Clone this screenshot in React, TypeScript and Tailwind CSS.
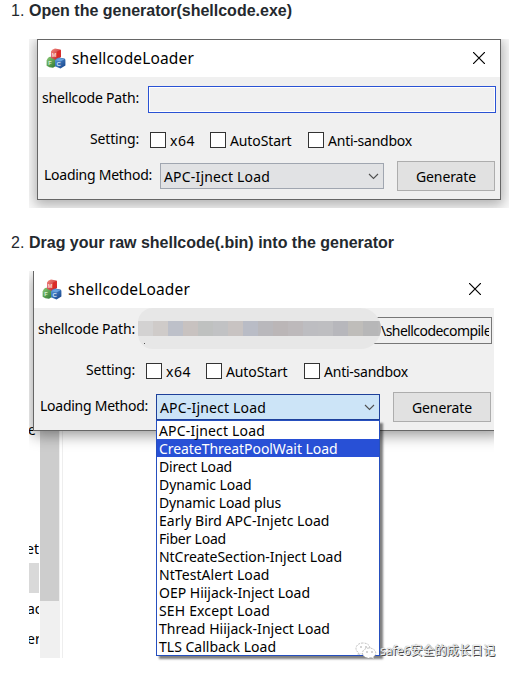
import React, { useLayoutEffect, useRef } from 'react';

const UI = "font-['Noto_Sans','Noto_Sans_CJK_SC',sans-serif]";

/* A single line of text whose letters are spaced to fill a given width. */
function Label({ text, width, className = '' }: { text: string; width: number; className?: string }) {
  const ref = useRef<HTMLSpanElement>(null);
  useLayoutEffect(() => {
    const el = ref.current;
    if (!el) return;
    const fit = () => {
      el.style.letterSpacing = '0px';
      const natural = el.getBoundingClientRect().width;
      el.style.letterSpacing = `${(width - natural) / text.length}px`;
    };
    fit();
    document.fonts.ready.then(fit);
  }, [text, width]);
  return (
    <span ref={ref} className={`inline-block shrink-0 whitespace-pre ${className}`}>
      {text}
    </span>
  );
}

function Heading({ n, text, width }: { n: string; text: string; width: number }) {
  return (
    <div className="flex h-[20px] pl-[11px] font-['Liberation_Sans',Arial,sans-serif] text-[16px] leading-[20px] text-[#24292e]">
      <span className="w-[18px] shrink-0">{n}</span>
      <Label text={text} width={width} className="font-bold" />
    </div>
  );
}

function Logo() {
  return (
    <svg width="20" height="21" viewBox="0 0 20 21" className="-mt-px shrink-0">
      <defs>
        <linearGradient id="r" x1="0" y1="0" x2="1" y2="1">
          <stop offset="0" stopColor="#f58a80" />
          <stop offset="1" stopColor="#b5121a" />
        </linearGradient>
        <linearGradient id="g" x1="0" y1="0" x2="1" y2="1">
          <stop offset="0" stopColor="#8fcc78" />
          <stop offset="1" stopColor="#25702b" />
        </linearGradient>
        <linearGradient id="b" x1="0" y1="0" x2="1" y2="1">
          <stop offset="0" stopColor="#5c9bdd" />
          <stop offset="1" stopColor="#123f86" />
        </linearGradient>
      </defs>
      <path d="M.6 12.500Q1 10.500 3 9l3-.6 5 2.300v6.500L7 19.800Q3 19.500.6 17.700z" fill="url(#g)" />
      <path d="M5 3.500Q5.500 1.500 9 .6l5.300.9q.8.400.7 1.500v6L10 12 5 9.800z" fill="url(#r)" />
      <path d="M10.800 3.800l3.900-2v7.100L11 11z" fill="#dc2a28" />
      <path d="M9 12.500Q9.500 10.500 13 9.400l5.500 1.100q1 .5.900 1.800v5.200L14.500 20.500 9 18.300z" fill="url(#b)" />
      <path d="M9.600 12.300 13.500 10l5 1.200-4.200 2.200z" fill="#69a2de" />
      <text x="5.800" y="8.700" fontSize="5.500" fontWeight="700" fill="#ffd6d2" className="font-['Liberation_Sans',sans-serif]">M</text>
      <text x="2.300" y="16.500" fontSize="5.500" fontWeight="700" fill="#d9f2d3" className="font-['Liberation_Sans',sans-serif]">F</text>
      <text x="10.500" y="18.300" fontSize="6" fontWeight="700" fill="#d3e6fb" className="font-['Liberation_Sans',sans-serif]">C</text>
    </svg>
  );
}

function CloseX() {
  return (
    <svg width="12" height="12" viewBox="0 0 12 12" className="shrink-0">
      <path d="M0 0 12 12M12 0 0 12" stroke="#000" strokeWidth="1.200" />
    </svg>
  );
}

function Check({ label, width, className = '' }: { label: string; width: number; className?: string }) {
  return (
    <div className={`flex items-center ${className}`}>
      <span className="h-[16px] w-[16px] shrink-0 border border-[#333] bg-white" />
      <Label text={label} width={width} className="ml-[4px] mt-[2px] leading-[20px]" />
    </div>
  );
}

/* Title bar and form of the generator dialog, 462px wide. */
function LoaderForm({ field, open = false }: { field: React.ReactNode; open?: boolean }) {
  return (
    <div className="w-full text-[14px] leading-[20px] text-black">
      <div className="flex h-[37px] items-center bg-white pl-[8px]">
        <Logo />
        <Label text="shellcodeLoader" width={122} className="-mt-[2px] ml-[6px] text-[15.500px]" />
        <span className="-mt-px ml-[279px]">
          <CloseX />
        </span>
      </div>
      <div className="h-[122px] bg-[#f0f0f0]">
        <div className="flex h-[36px] items-start pt-[9px]">
          <Label text="shellcode Path:" width={97} className="ml-[4px] mt-[2px]" />
          <div className="ml-[9px] h-[27px] w-[348px] shrink-0">{field}</div>
        </div>
        <div className="mt-[15px] flex h-[24px] items-center pl-[52px]">
          <Label text="Setting:" width={49} className="-mt-[2px]" />
          <Check label="x64" width={25} className="ml-[11px]" />
          <Check label="AutoStart" width={61.5} className="ml-[15px]" />
          <Check label="Anti-sandbox" width={84} className="ml-[16.500px]" />
        </div>
        <div className="mt-[9px] flex h-[30px] items-center pl-[6px]">
          <Label text="Loading Method:" width={108} className="-mt-[3px]" />
          <div
            className={`ml-[8px] flex h-[26px] w-[224px] shrink-0 items-center border pl-[3px] pr-[4px] ${
              open ? 'border-[#1e409a] bg-[#cce4f7]' : 'border-[#a0a6b0] bg-[#e1e2e4]'
            }`}
          >
            <Label text="APC-Ijnect Load" width={106} className="mt-[2px]" />
            <svg width="11" height="7" viewBox="0 0 11 7" className="ml-auto">
              <path d="M1 1l4.500 4.500L10 1" fill="none" stroke="#505050" strokeWidth="1.100" />
            </svg>
          </div>
          <div className="ml-[13px] flex h-[30px] w-[98px] shrink-0 items-center justify-center border border-[#adadad] bg-[#e1e1e1]">
            <Label text="Generate" width={60} className="mt-[2px]" />
          </div>
        </div>
      </div>
    </div>
  );
}

const methods: [string, number][] = [
  ['APC-Ijnect Load', 106],
  ['CreateThreatPoolWait Load', 178.5],
  ['Direct Load', 73],
  ['Dynamic Load', 92.5],
  ['Dynamic Load plus', 122],
  ['Early Bird APC-Injetc Load', 170.5],
  ['Fiber Load', 67],
  ['NtCreateSection-Inject Load', 183],
  ['NtTestAlert Load', 110.5],
  ['OEP Hiijack-Inject Load', 151],
  ['SEH Except Load', 111],
  ['Thread Hiijack-Inject Load', 171],
  ['TLS Callback Load', 117],
];

const mosaic = [
  'bg-[#d3d2d2]', 'bg-[#cfcbc9]', 'bg-[#bdc0c9]', 'bg-[#c8c2c0]', 'bg-[#bfc1c0]',
  'bg-[#c1c2c4]', 'bg-[#c8c3c2]', 'bg-[#b9bcc6]', 'bg-[#b9b8bc]', 'bg-[#bbb6b7]',
  'bg-[#bdb9bb]', 'bg-[#bdbdc1]', 'bg-[#bebec1]', 'bg-[#b7b7bc]', 'bg-[#bfbdba]', 'bg-[#b7b7b8]', 'bg-[#b9b9ba]',
];

function PathField() {
  return (
    <div className="relative h-full">
      <div className="ml-auto flex h-full w-[130px] items-center justify-end border border-[#777] pr-[2px]">
        <div className="mt-px w-[108px] overflow-hidden">
          <Label text="\shellcodecompile" width={110} />
        </div>
      </div>
      <div className="absolute -left-[6px] -top-[9px] flex h-[41px] w-[243px] items-center overflow-hidden rounded-[20px_28px_28px_20px] bg-[#e7e7e7]">
        <div className="flex h-[15px] w-[255px] shrink-0">
          {mosaic.map((c, i) => (
            <span key={i} className={`h-full w-[15px] shrink-0 ${c}`} />
          ))}
        </div>
      </div>
      <span className="absolute left-0 top-[26px] h-px w-px bg-[#555]" />
    </div>
  );
}

function Watermark() {
  return (
    <div className="absolute left-[326px] top-[371px] flex items-center">
      <svg width="22" height="18" viewBox="0 0 22 18">
        <g fill="#fff" stroke="#aaa" strokeWidth=".7" strokeDasharray="2 1">
          <path d="M8 1C3.500 1 1 3.600 1 6.500c0 2 1.200 3.300 2.500 4.200L3 13l2.500-1.300C12 13 15 10 15 6.500 15 3 12 1 8 1z" />
          <path d="M14 6c-4 0-6.500 2.400-6.500 5s2.500 5 6.500 5l2.500-.4L19 17l-.5-2.200c1.500-1 2.300-2.300 2.300-3.800C20.800 8.400 18 6 14 6z" />
        </g>
        <g fill="#888">
          <circle cx="6" cy="5" r=".7" />
          <circle cx="11" cy="5" r=".7" />
          <circle cx="12" cy="10" r=".7" />
          <circle cx="17" cy="10" r=".7" />
        </g>
      </svg>
      <Label
        text="safe6安全的成长日记"
        width={115}
        className="ml-[3px] text-[12px] leading-[18px] text-[#eee] [text-shadow:1px_1px_0_#444,0_0_1px_#777]"
      />
    </div>
  );
}

/* Slice of the page behind the dialog: cut-off words and a scroll bar. */
function Backdrop() {
  return (
    <div className="flex h-[238px] w-[34px] text-[14px] leading-[20px] text-black">
      <div className="flex w-[10px] flex-col overflow-hidden">
        <span className="-ml-px">e</span>
        <span className="-ml-[3px] mt-[99px]">ets</span>
        <span className="mt-[4px] h-[30px] w-full shrink-0 bg-[#d9d9d9]" />
        <span className="-ml-[2px] mt-[6px]">ac</span>
        <span className="-ml-[2px] mt-[10px]">er</span>
      </div>
      <div className="ml-px w-[20px] bg-[#f0f0f0]">
        <div className="h-[181px] w-[19px] bg-[#cdcdcd]" />
      </div>
      <div className="ml-[2px] w-px bg-[#eee]" />
    </div>
  );
}

export default function App() {
  return (
    <div className={`h-[674px] w-[512px] overflow-hidden bg-white ${UI}`}>
      <div className="pt-[1px]">
        <Heading n="1." text="Open the generator(shellcode.exe)" width={263} />
      </div>

      <div className="ml-[29px] mt-[18px] h-[169px] w-[480px] overflow-hidden bg-[#fafafa] pl-[8px]">
        <div className="h-[161px] w-[464px] border border-[#666] shadow-[0_3px_12px_2px_rgba(0,0,0,0.3)]">
          <LoaderForm
            field={
              <div className="h-full border border-[#2a52d4] p-px">
                <div className="h-full bg-[#f0f0f0] outline outline-white" />
              </div>
            }
          />
        </div>
      </div>

      <div className="mt-[25px]">
        <Heading n="2." text="Drag your raw shellcode(.bin) into the generator" width={365} />
      </div>

      <div className="relative ml-[29px] mt-[18px] h-[387px] w-[480px]">
        <div className="relative z-10 h-[190px] w-[465px] overflow-hidden pl-[4px]">
          <div className="h-[160px] w-[470px] border-b border-l border-[#666] shadow-[0_4px_14px_rgba(0,0,0,0.42)]">
            <LoaderForm open field={<PathField />} />
          </div>
        </div>
        <div className="-mt-[41px]">
          <Backdrop />
        </div>
        <div className="absolute left-[127px] top-[149px] z-20 h-[236px] w-[224px] border border-[#264fbe] bg-white text-[14px] leading-[20px] shadow-[3px_3px_2px_rgba(0,0,0,0.5)]">
          {methods.map(([name, width], i) => (
            <div key={name} className={`flex h-[18px] pl-[2px] ${i === 1 ? 'bg-[#2850d6] text-white' : 'text-black'}`}>
              <Label text={name} width={width} />
            </div>
          ))}
        </div>
        <div className="absolute inset-0 z-30">
          <Watermark />
        </div>
      </div>
    </div>
  );
}
